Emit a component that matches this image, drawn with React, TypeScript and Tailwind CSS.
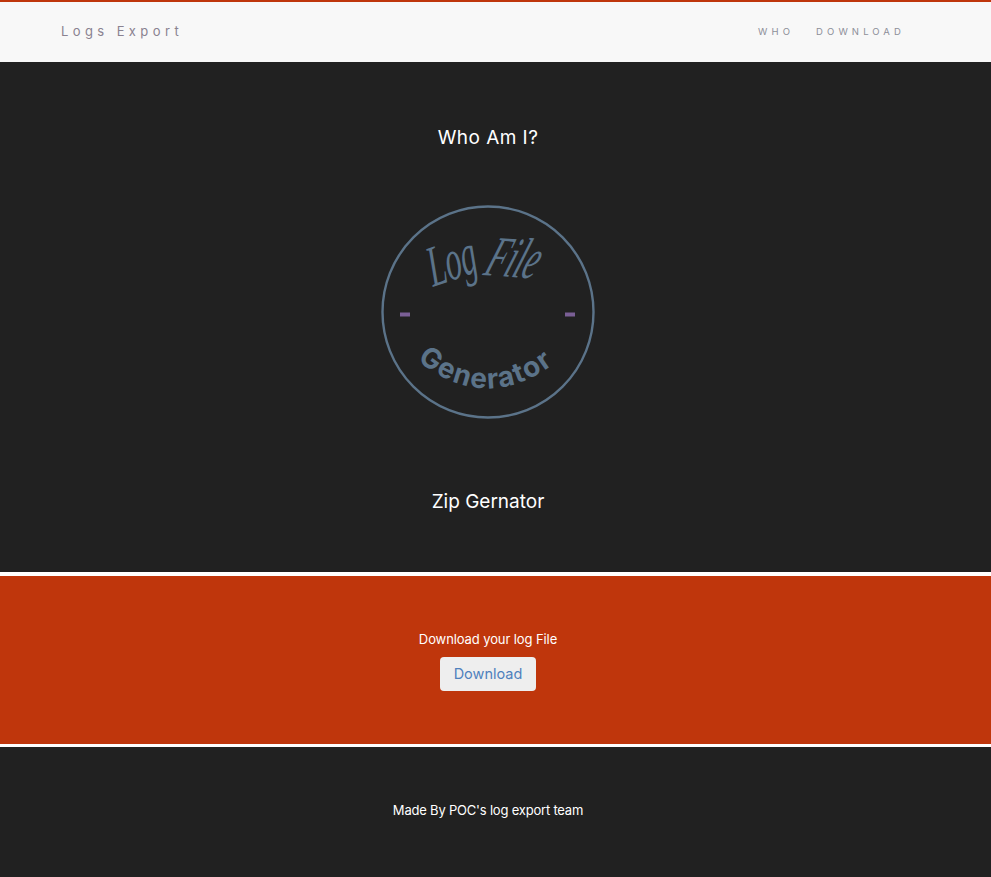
function LogoBadge() {
  return (
    <svg width="214" height="214" viewBox="0 0 214 214" className="block">
      <defs>
        <path id="gen-arc" d="M 36 155 Q 106 212 178 155" fill="none" />
      </defs>
      <circle cx="107" cy="107" r="105.5" fill="none" stroke="#5b7389" strokeWidth="2.4" />
      <g fill="#5b7389" fontSize="58" fontStyle="italic" fontFamily="'Liberation Serif', serif">
        <text transform="translate(52 82) rotate(-19) skewX(-4) scale(0.55 1)">Log</text>
        <text transform="translate(101 70) rotate(4) skewX(-18) scale(0.55 1)">File</text>
      </g>
      <text fill="#5b7389" fontSize="28" fontWeight="700" letterSpacing="1.4" fontFamily="Inter, sans-serif">
        <textPath href="#gen-arc">Generator</textPath>
      </text>
      <rect x="19" y="107.5" width="10" height="4" fill="#7a5f95" />
      <rect x="184" y="107.5" width="10" height="4" fill="#7a5f95" />
    </svg>
  );
}

export default function App() {
  return (
    <div className="bg-white min-h-screen font-['Inter','Noto_Sans',sans-serif]">
      <header className="h-[62px] bg-[#f8f8f8] border-t-2 border-[#bf360c] flex items-center justify-between pl-[61px] pr-[86px]">
        <a className="text-[13px] tracking-[4.4px] text-[#8a8290]">Logs Export</a>
        <nav className="flex items-center gap-[22px] text-[9.5px] tracking-[4.1px] text-[#8d8f98]">
          <a>WHO</a>
          <a>DOWNLOAD</a>
        </nav>
      </header>

      <section className="h-[510px] bg-[#212121] flex flex-col items-center pr-[15px] text-white">
        <h2 className="mt-[63px] text-[19px] leading-[26px] tracking-[0.45px]">Who Am I?</h2>
        <div className="mt-[54px]">
          <LogoBadge />
        </div>
        <h2 className="mt-[70px] text-[19px] leading-[26px]">Zip Gernator</h2>
      </section>

      <section className="mt-[4px] h-[168px] bg-[#bf360c] flex flex-col items-center pr-[15px] pt-[54px] text-white">
        <p className="text-[13px] leading-[18px] tracking-[-0.1px]">Download your log File</p>
        <button className="mt-[9px] w-[96px] h-[34px] rounded-[4px] bg-[#eeeeee] text-[14.5px] text-[#4f81bd]">
          Download
        </button>
      </section>

      <footer className="mt-[3px] h-[130px] bg-[#212121] flex justify-center pr-[15px] pt-[54px] text-white">
        <p className="text-[13px] leading-[18px] tracking-[-0.2px]">Made By POC's log export team</p>
      </footer>
    </div>
  );
}
